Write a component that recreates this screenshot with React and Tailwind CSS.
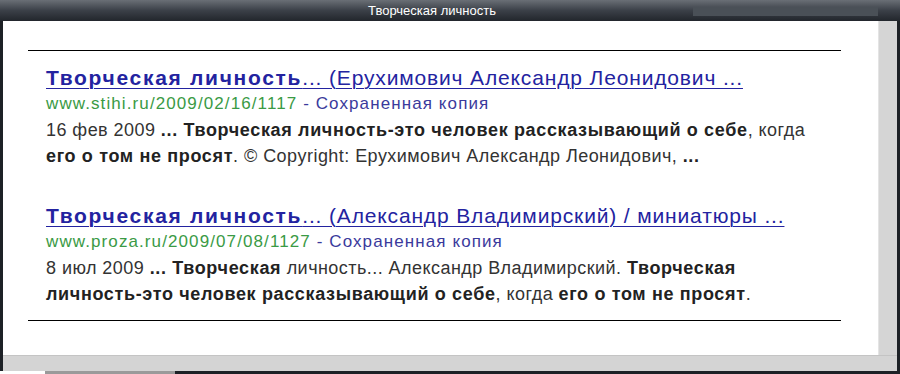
import React from 'react'

const results = [
  {
    titleBold: 'Творческая личность',
    titleRest: '... (Ерухимович Александр Леонидович ...',
    url: 'www.stihi.ru/2009/02/16/1117',
    lines: [
      [
        ['16 фев 2009 ', false],
        ['... Творческая личность-это человек рассказывающий о себе', true],
        [', когда', false],
      ],
      [
        ['его о том не просят', true],
        ['. © Copyright: Ерухимович Александр Леонидович, ', false],
        ['...', true],
      ],
    ],
  },
  {
    titleBold: 'Творческая личность',
    titleRest: '... (Александр Владимирский) / миниатюры ...',
    url: 'www.proza.ru/2009/07/08/1127',
    lines: [
      [
        ['8 июл 2009 ', false],
        ['... Творческая', true],
        [' личность... Александр Владимирский. ', false],
        ['Творческая', true],
      ],
      [
        ['личность-это человек рассказывающий о себе', true],
        [', когда ', false],
        ['его о том не просят', true],
        ['.', false],
      ],
    ],
  },
]

const Result = ({ item }) => (
  <div className="flex flex-col">
    <a className="text-[21px] leading-[26px] text-[#2323a0] underline underline-offset-[3px] decoration-[1px] whitespace-nowrap">
      <span className="font-bold tracking-[1.7px]">{item.titleBold}</span>
      <span className="tracking-[0.85px]">{item.titleRest}</span>
    </a>
    <div className="text-[17px] leading-[26px] whitespace-nowrap tracking-[1.1px]">
      <span className="text-[#3a9a45]">{item.url}</span>
      <span className="text-[#3a3a9c]"> - Сохраненная копия</span>
    </div>
    <div className="text-[18px] leading-[26px] text-[#333] tracking-[0.45px]">
      {item.lines.map((line, i) => (
        <div key={i} className="whitespace-nowrap">
          {line.map(([text, bold], j) => (
            <span key={j} className={bold ? 'font-bold text-[#222] tracking-[0.65px]' : ''}>{text}</span>
          ))}
        </div>
      ))}
    </div>
  </div>
)

export default function App() {
  return (
    <div className="w-[900px] h-[374px] bg-[#1d2126] flex flex-col overflow-hidden" style={{ fontFamily: '"Liberation Sans", Arial, sans-serif' }}>
      {/* title bar */}
      <div className="h-[21px] flex items-center justify-center pr-[36px] bg-gradient-to-b from-[#6a6f76] via-[#3b4048] to-[#22262c] relative">
        <span className="text-[13px] text-white leading-none">Творческая личность</span>
        <div className="absolute right-[22px] top-[7px] w-[185px] h-[9px] bg-[#4a5057]" />
      </div>

      <div className="flex-1 flex flex-col pl-[3px] pr-[3px]">
        <div className="flex-1 flex">
          <div className="flex-1 bg-white pt-[29px] pl-[25px]">
            <div className="w-[813px] border-t border-black" />
            <div className="pl-[18px] pt-[14px] flex flex-col gap-[34px]">
              {results.map((r, i) => (
                <Result key={i} item={r} />
              ))}
            </div>
            <div className="w-[813px] border-t border-black mt-[13px]" />
          </div>
          <div className="w-[19px] bg-[#d5d5d5] border-l border-[#e4e4e4]" />
        </div>
        <div className="h-[16px] bg-[#d4d4d4] border-t border-[#c4c4c4]" />
      </div>
      <div className="h-[3px] flex">
        <div className="w-[45px] bg-white" />
        <div className="w-[130px] bg-[#9a9a9a]" />
      </div>
    </div>
  )
}
